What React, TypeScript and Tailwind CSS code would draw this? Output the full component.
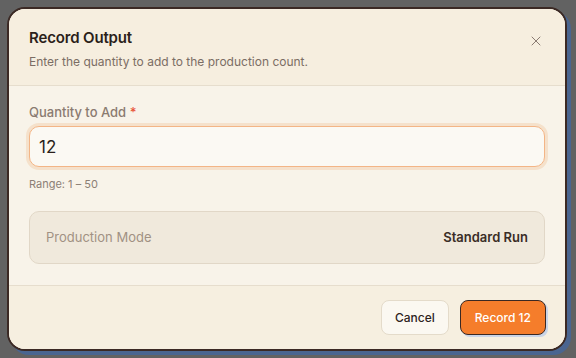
import React from "react";
import { X } from "lucide-react";

export default function App() {
  const [qty, setQty] = React.useState("12");

  return (
    <div
      className="w-[576px] h-[358px] bg-[#626262] p-[7px] overflow-hidden"
      style={{ fontFamily: "Inter, 'Noto Sans', sans-serif" }}
    >
      <div className="w-[560px] h-[344px] flex flex-col rounded-[18px] border-2 border-[#3b2924] bg-[#f8f3e9] shadow-[4px_4px_0_#4a6590] overflow-hidden">
        {/* Header */}
        <div className="flex items-start justify-between bg-[#f6eedf] border-b border-[#e6ddcd] px-5 pt-[19px] pb-[15px]">
          <div>
            <h2 className="text-[15px] font-semibold text-[#2b1f1a] leading-5 tracking-[-0.01em]">Record Output</h2>
            <p className="mt-[6px] text-[12px] text-[#7b6d64] leading-4">Enter the quantity to add to the production count.</p>
          </div>
          <button className="mt-[3px] -mr-[1px] p-[2px] text-[#8a7b72]">
            <X className="w-4 h-4" strokeWidth={1.5} />
          </button>
        </div>

        {/* Body */}
        <div className="flex-1 px-5 pt-[18px]">
          <label className="block text-[13px] font-medium text-[#8b7b71] leading-4">
            Quantity to Add <span className="text-[#e8553a]">*</span>
          </label>
          <input
            value={qty}
            onChange={(e) => setQty(e.target.value)}
            className="mt-[6px] w-full h-[41px] px-[9px] rounded-[10px] bg-[#fbf9f3] border border-[#f3b586] ring-[3px] ring-[#f5e1cb] outline-none text-[17px] text-[#2a1f1a]"
          />
          <p className="mt-[9px] text-[11px] text-[#8c7f75] leading-4">Range: 1 – 50</p>

          <div className="mt-[19px] h-[53px] flex items-center justify-between px-4 rounded-[10px] bg-[#f0e9dc] border border-[#e1d7c7]">
            <span className="text-[13px] text-[#a19183]">Production Mode</span>
            <span className="text-[13px] font-semibold text-[#3a2d27]">Standard Run</span>
          </div>
        </div>

        {/* Footer */}
        <div className="h-[64px] flex items-center justify-end gap-[11px] pl-5 pr-[19px] bg-[#f6efe0] border-t border-[#e6ddcd]">
          <button className="h-[35px] px-[13px] rounded-[8px] bg-[#fbf8f1] border border-[#e4dbca] text-[12px] font-medium text-[#2d221d]">
            Cancel
          </button>
          <button className="h-[35px] px-[14px] rounded-[8px] bg-[#f57d2b] border border-[#3b2822] text-[12px] font-medium text-white shadow-[2px_2px_0_#c9d4e6]">
            Record 12
          </button>
        </div>
      </div>
    </div>
  );
}
